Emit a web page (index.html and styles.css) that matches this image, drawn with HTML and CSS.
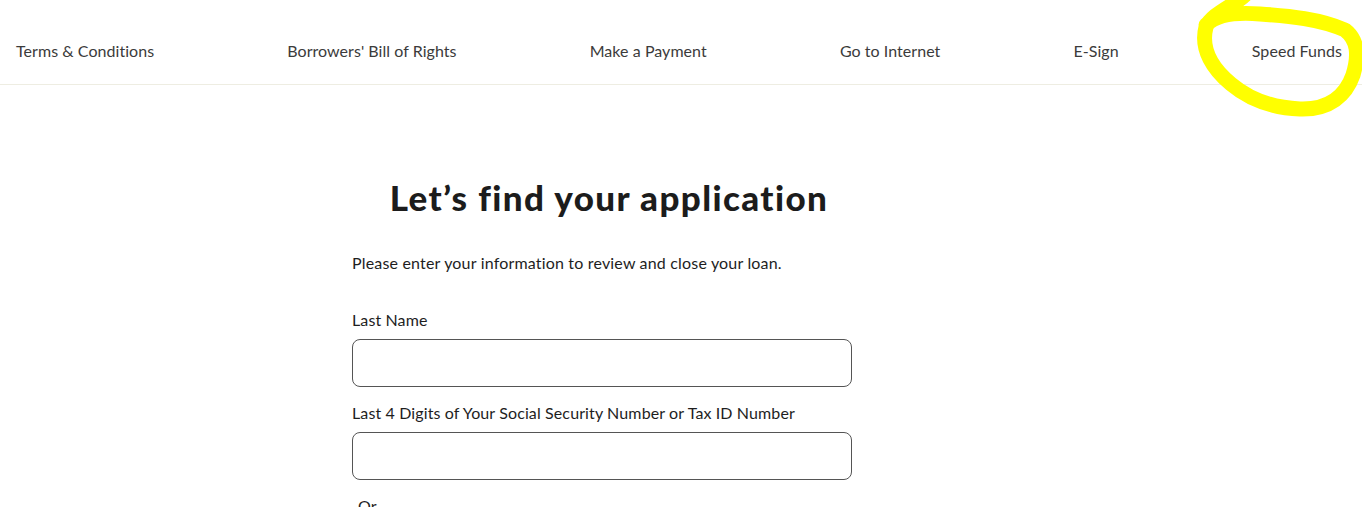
FILE: index.html
```html
<!DOCTYPE html>
<html lang="en">
<head>
<meta charset="utf-8">
<title>Let's find your application</title>
<link rel="stylesheet" href="styles.css">
</head>
<body>
<nav class="topnav">
  <a href="#">Terms &amp; Conditions</a>
  <a href="#">Borrowers' Bill of Rights</a>
  <a href="#">Make a Payment</a>
  <a href="#">Go to Internet</a>
  <a href="#">E-Sign</a>
  <a href="#">Speed Funds</a>
</nav>
<main class="content">
  <h1 class="title">Let’s find your application</h1>
  <form class="form">
    <p class="intro">Please enter your information to review and close your loan.</p>
    <label class="field">
      <span class="label">Last Name</span>
      <input type="text" class="input">
    </label>
    <label class="field">
      <span class="label">Last 4 Digits of Your Social Security Number or Tax ID Number</span>
      <input type="text" class="input">
    </label>
    <p class="or">Or</p>
  </form>
</main>
<svg class="annotation" width="180" height="125" viewBox="1190 0 180 125" aria-hidden="true">
  <path d="M1246 -6 C1236 5 1212 13 1206 27 C1200 50 1214 70 1231 84 C1250 100 1275 108 1300 109 C1330 110 1346 95 1353 75 C1359 55 1358 40 1345 30 C1320 19 1290 16 1260 14 C1236 12 1216 15 1206 25" fill="none" stroke="#ffff00" stroke-width="15" stroke-linecap="round" stroke-linejoin="round"/>
</svg>
</body>
</html>
```

FILE: styles.css
```css
html, body {
  margin: 0;
  padding: 0;
  background: #ffffff;
}
body {
  font-family: "Lato", "Liberation Sans", sans-serif;
  color: #1e1e1e;
  overflow: hidden;
}
.topnav {
  display: flex;
  align-items: center;
  justify-content: space-between;
  height: 85px;
  box-sizing: border-box;
  padding: 16px 20px 0 16px;
  border-bottom: 1px solid #eeede2;
}
.topnav a {
  color: #3b3b3b;
  text-decoration: none;
  font-size: 16px;
  letter-spacing: 0.05px;
  white-space: nowrap;
}
.content {
  width: 500px;
  margin: 0 auto 0 352px;
  display: flex;
  flex-direction: column;
}
.title {
  margin: 92px 0 0 14px;
  font-size: 35px;
  font-weight: 900;
  letter-spacing: 1.4px;
  line-height: 40px;
  text-align: center;
  color: #1c1c1c;
}
.form {
  display: flex;
  flex-direction: column;
}
.intro {
  margin: 36px 0 0;
  font-size: 16px;
  letter-spacing: 0.18px;
  line-height: 20px;
}
.field {
  display: flex;
  flex-direction: column;
}
.intro + .field {
  margin-top: 37px;
}
.field + .field {
  margin-top: 16px;
}
.label {
  font-size: 16px;
  letter-spacing: 0.12px;
  line-height: 20px;
  margin-bottom: 9px;
}
.input {
  height: 48px;
  box-sizing: border-box;
  border: 1px solid #555555;
  border-radius: 8px;
  margin: 0;
  padding: 0 12px;
  font: inherit;
}
.or {
  margin: 16px 0 0 6px;
  font-size: 16px;
  line-height: 20px;
}
.annotation {
  position: absolute;
  top: 0;
  left: 1190px;
}
```
